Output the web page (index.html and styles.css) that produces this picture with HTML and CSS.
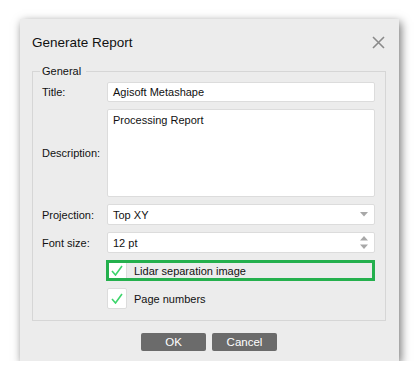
FILE: index.html
```html
<!DOCTYPE html>
<html lang="en">
<head>
  <meta charset="UTF-8">
  <meta name="viewport" content="width=device-width, initial-scale=1">
  <title>Generate Report</title>
  <link rel="stylesheet" href="styles.css">
</head>
<body>

  <div class="dialog">
    <div class="dialog-head">
      <h1>Generate Report</h1>
      <svg class="close" width="13" height="13" viewBox="0 0 13 13">
        <path d="M1 1 L12 12 M12 1 L1 12" stroke="#8a8a8a" stroke-width="1.6" fill="none"/>
      </svg>
    </div>

    <fieldset class="group">
      <legend>General</legend>

      <div class="row">
        <label>Title:</label>
        <div class="field short">Agisoft Metashape</div>
      </div>

      <div class="row">
        <label>Description:</label>
        <div class="field area">Processing Report</div>
      </div>

      <div class="row">
        <label>Projection:</label>
        <div class="field combo">
          <span>Top XY</span>
          <svg width="8" height="5" viewBox="0 0 8 5"><path d="M0 0 H8 L4 4.5 Z" fill="#a8a8a8"/></svg>
        </div>
      </div>

      <div class="row">
        <label>Font size:</label>
        <div class="field combo">
          <span>12 pt</span>
          <svg width="8" height="13" viewBox="0 0 8 13"><path d="M0 4.5 H8 L4 0 Z M0 8.5 H8 L4 13 Z" fill="#a8a8a8"/></svg>
        </div>
      </div>

      <div class="row">
        <label></label>
        <div class="check highlight">
          <span class="box">
            <svg width="12" height="11" viewBox="0 0 12 11"><path d="M1 6 L4.5 10 L11 1" stroke="#3dd56c" stroke-width="1.6" fill="none"/></svg>
          </span>
          <span>Lidar separation image</span>
        </div>
      </div>

      <div class="row">
        <label></label>
        <div class="check">
          <span class="box">
            <svg width="12" height="11" viewBox="0 0 12 11"><path d="M1 6 L4.5 10 L11 1" stroke="#3dd56c" stroke-width="1.6" fill="none"/></svg>
          </span>
          <span>Page numbers</span>
        </div>
      </div>
    </fieldset>

    <div class="buttons">
      <button>OK</button>
      <button>Cancel</button>
    </div>
  </div>

</body>
</html>
```

FILE: styles.css
```css
body {
  margin: 0;
  padding: 19px 0 0 20px;
  background-color: #fff;
  font-family: "Liberation Sans", Arial, sans-serif;
  font-size: 11px;
  color: #111;
}
.dialog {
  width: 379px;
  height: 342px;
  box-sizing: border-box;
  padding: 0 13px 0 12px;
  background-color: #ececec;
  box-shadow: 2px 3px 9px rgba(0, 0, 0, 0.55);
}
.dialog-head {
  display: flex;
  justify-content: space-between;
  align-items: center;
  height: 46px;
}
.dialog-head h1 {
  margin: 0;
  font-size: 13.5px;
  font-weight: normal;
  color: #111;
}
.close {
  margin-right: 1px;
}
.group {
  margin: 0;
  padding: 5px 10px 11px 9px;
  border: 1px solid #d6d6d6;
  display: flex;
  flex-direction: column;
  gap: 7px;
}
.group legend {
  padding: 0 5px 0 2px;
  margin-left: -2px;
}
.row {
  display: flex;
  align-items: center;
}
.row label {
  width: 65px;
  flex: none;
}
.field {
  flex: 1;
  height: 21px;
  box-sizing: border-box;
  padding: 0 5px;
  display: flex;
  align-items: center;
  background-color: #fff;
  border: 1px solid #dcdcdc;
  border-radius: 2px;
}
.field.short {
  height: 20px;
}
.field.area {
  height: 88px;
  align-items: flex-start;
  padding-top: 4px;
}
.field.combo {
  justify-content: space-between;
  padding-right: 6px;
}
.check {
  display: flex;
  align-items: center;
  gap: 7px;
  height: 21px;
}
.check.highlight {
  flex: 1;
  outline: 3px solid #24b04d;
  outline-offset: -3px;
  margin-left: -1px;
  padding-left: 1px;
}
.box {
  width: 20px;
  height: 21px;
  box-sizing: border-box;
  display: flex;
  align-items: center;
  justify-content: center;
  background-color: #fff;
  border: 1px solid #dcdcdc;
  border-radius: 2px;
}
.buttons {
  display: flex;
  justify-content: center;
  gap: 6px;
  margin-top: 12px;
}
.buttons button {
  width: 65px;
  height: 18px;
  padding: 0;
  border: none;
  border-radius: 2px;
  background-color: #6b6b6b;
  color: #fff;
  font-family: inherit;
  font-size: 11.5px;
}
```
